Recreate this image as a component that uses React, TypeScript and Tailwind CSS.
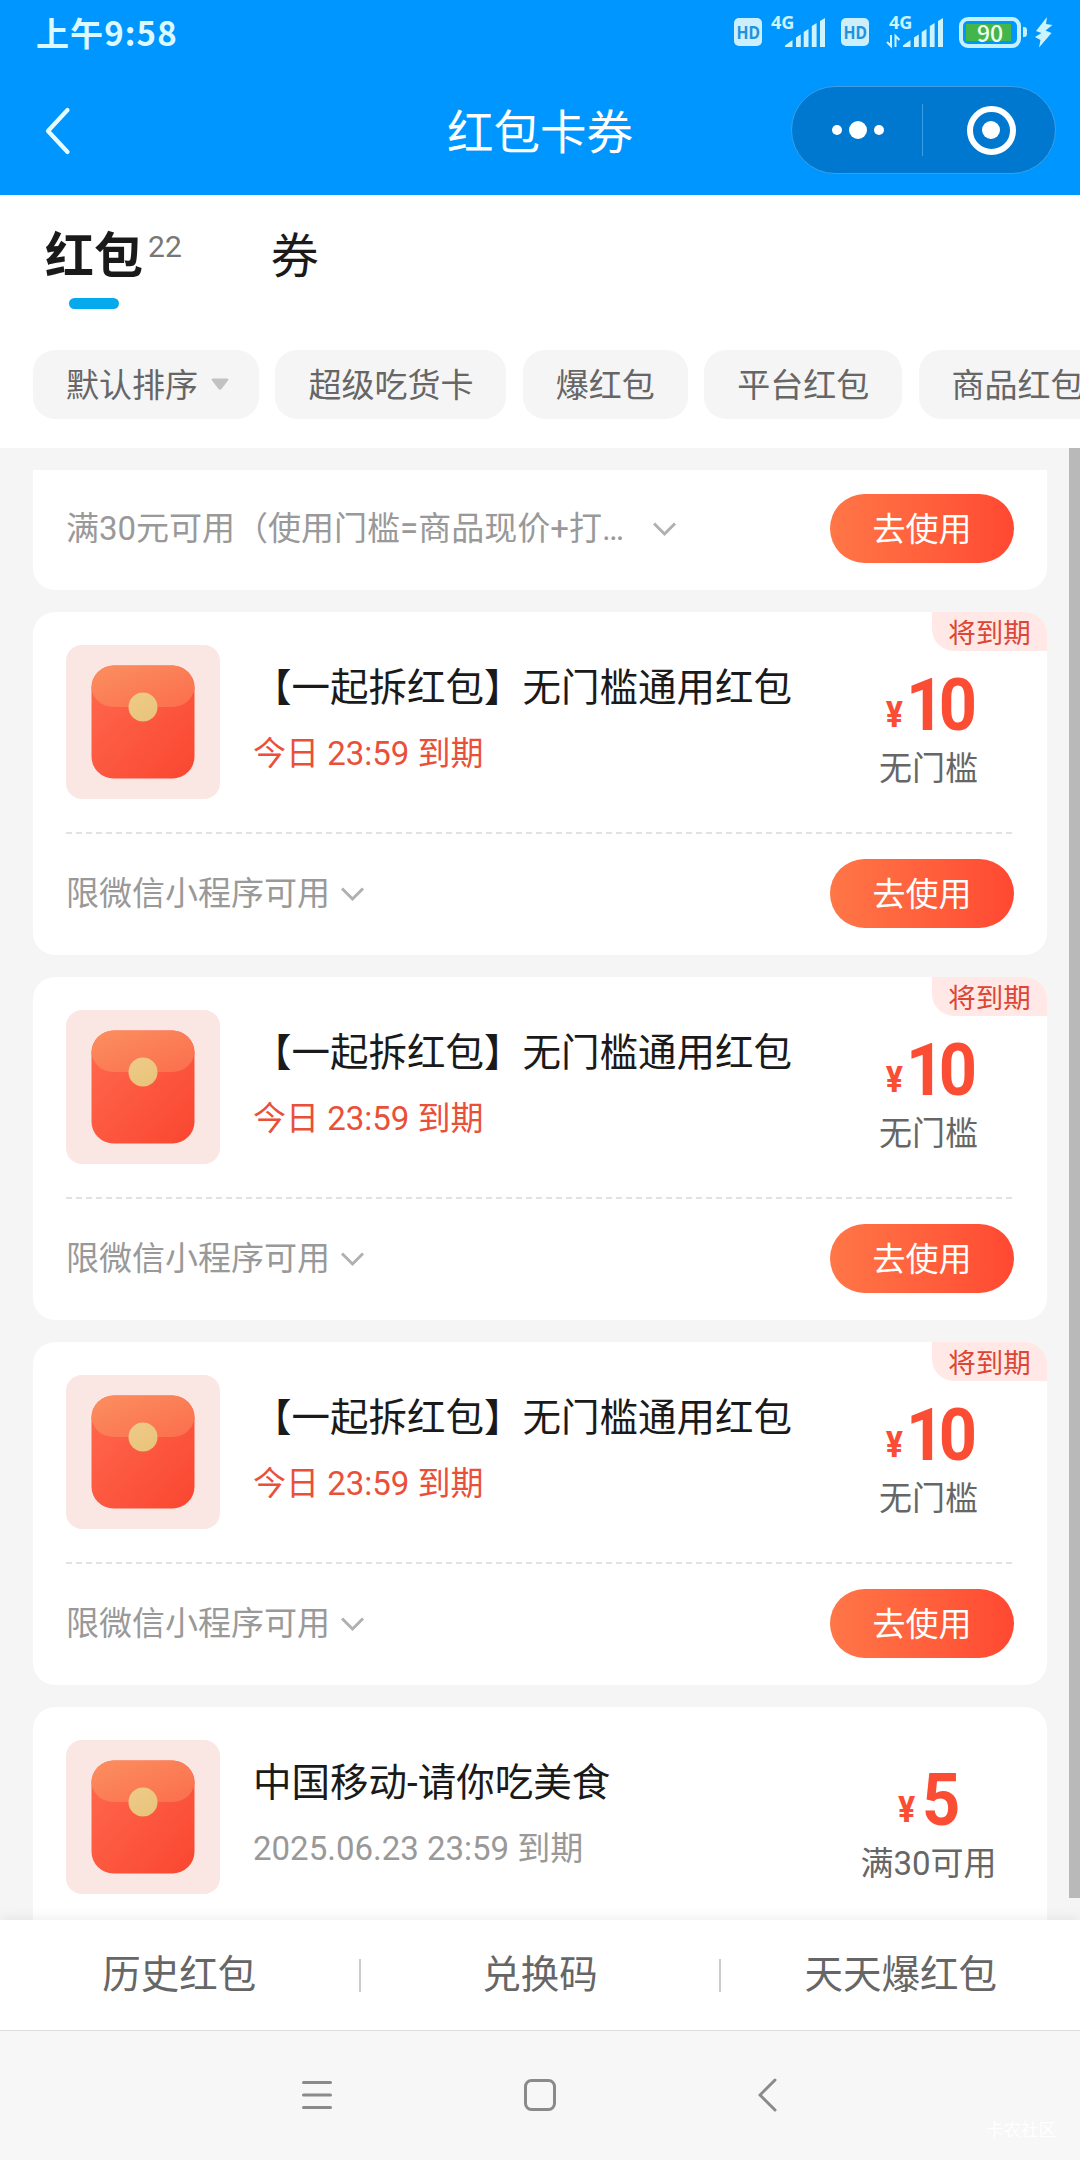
type Coupon = {
  title: string;
  expiry: string;
  amount: string;
  condition: string;
  note?: string;
  urgent: boolean;
};

const redPacket: Coupon = {
  title: '【一起拆红包】无门槛通用红包',
  expiry: '今日 23:59 到期',
  amount: '10',
  condition: '无门槛',
  note: '限微信小程序可用',
  urgent: true,
};

const coupons: Coupon[] = [
  redPacket,
  redPacket,
  redPacket,
  {
    title: '中国移动-请你吃美食',
    expiry: '2025.06.23 23:59 到期',
    amount: '5',
    condition: '满30可用',
    urgent: false,
  },
];

function HdIcon() {
  return (
    <svg width="28" height="28" viewBox="0 0 28 28">
      <rect width="28" height="28" rx="5" fill="#cdeffb" />
      <text x="2.500" y="21" fill="#1f93dd" fontFamily="Noto Sans" fontWeight="700" fontSize="18.500" textLength="23.500" lengthAdjust="spacingAndGlyphs">
        HD
      </text>
    </svg>
  );
}

function Signal({ data }: { data?: boolean }) {
  return (
    <svg className="overflow-visible" width="60" height="32" viewBox="0 0 60 32" fill="#cdf3fd">
      <text x="2" y="12.500" fontFamily="Noto Sans" fontWeight="700" fontSize="17" textLength="23.500" lengthAdjust="spacingAndGlyphs">
        4G
      </text>
      <path d="M16 31 V29.500 L23.500 24 V31Z M27 21.500 L31.800 18.500 V31 H27Z M34.700 16 L39.500 13 V31 H34.700Z M42.800 10 L47.600 7 V31 H42.800Z M51 5 L56 2 V31 H51Z" />
      {data && <path d="M4 19 V30 L0 26 M8.500 31 V20 L12.500 24" fill="none" stroke="#cdf3fd" strokeWidth="2" />}
    </svg>
  );
}

function StatusBar() {
  return (
    <div className="flex h-[66px] items-start pl-9 pr-[27px] text-[#dcf9ff]">
      <div className="mt-[11px] flex-1 font-['Noto_Sans_CJK_SC',sans-serif] text-[33px] font-bold leading-[42px] tracking-[1.1px]">
        上午9:58
      </div>
      <div className="mt-4 flex h-8 items-center">
        <HdIcon />
        <div className="ml-[7px] flex">
          <Signal />
        </div>
        <div className="ml-3 flex">
          <HdIcon />
        </div>
        <div className="ml-[18px] flex">
          <Signal data />
        </div>
        <div className="ml-3 flex h-[31px] w-[62px] items-center justify-center rounded-[9px] border-4 border-[#c4f1fb] p-[3px]">
          <div className="flex h-[17px] w-full items-center justify-center bg-linear-to-r from-[#43b649] from-[93%] to-transparent to-[93%] font-['Noto_Sans_CJK_SC',sans-serif] text-[23px] font-medium leading-none text-[#effff5]">
            90
          </div>
        </div>
        <div className="ml-[2px] h-[10px] w-1 rounded-r-[3px] bg-[#c4f1fb]" />
        <svg className="ml-[7px]" width="19" height="32" viewBox="0 0 19 32" fill="#cdf3fd">
          <path d="M13 1 L2 15 L7.500 17 L1 21 L6.500 24 L5 31.500 L17.500 17 L11.500 14.500 L18.500 9 L12 8Z" />
        </svg>
      </div>
    </div>
  );
}

function Header() {
  return (
    <header className="h-[195px] shrink-0 bg-[#0096ff]">
      <StatusBar />
      <div className="grid h-[129px] grid-cols-[1fr_auto_1fr] items-center">
        <svg className="ml-[42px]" width="30" height="50" viewBox="0 0 30 50" fill="none" stroke="#e6fbff" strokeWidth="4.200" strokeLinecap="round" strokeLinejoin="round">
          <path d="M25.500 4 L6 25 L25.500 46" />
        </svg>
        <h1 className="mb-1 font-['Noto_Sans_CJK_SC',sans-serif] text-[46.500px] leading-[60px] text-white">红包卡券</h1>
        <div className="mb-[2px] mr-6 flex h-[88px] w-[265px] items-center justify-self-end rounded-full border border-[#3a9fe6] bg-[#0078cf]">
          <div className="flex flex-1 items-center justify-center gap-[7px] pl-[2px] pt-px">
            <span className="h-[10px] w-[10px] rounded-full bg-white" />
            <span className="h-[18px] w-[18px] rounded-full bg-white" />
            <span className="h-[10px] w-[10px] rounded-full bg-white" />
          </div>
          <div className="h-[52px] w-px bg-[#3a9fe6]" />
          <div className="flex flex-1 items-center justify-center pl-[5px] pt-px">
            <div className="flex h-[49px] w-[49px] items-center justify-center rounded-full border-[6px] border-white">
              <span className="h-[18px] w-[18px] rounded-full bg-white" />
            </div>
          </div>
        </div>
      </div>
    </header>
  );
}

function Tabs() {
  return (
    <div className="flex h-[155px] items-start pl-[45px] pt-[27px] text-[#1a1a1a]">
      <div className="flex flex-col">
        <div className="flex h-[66px]">
          <span className="pt-[2px] text-[49px] font-bold leading-[66px]">红包</span>
          <span className="ml-[5px] mt-[3px] text-[30px] leading-[44px] text-[#777]">22</span>
        </div>
        <div className="ml-6 mt-[10px] h-[11px] w-[50px] rounded-full bg-[#06a9eb]" />
      </div>
      <span className="ml-[89px] pt-[2px] text-[48px] leading-[66px]">券</span>
    </div>
  );
}

function Filters() {
  const chips = ['超级吃货卡', '爆红包', '平台红包', '商品红包'];
  return (
    <div className="flex h-[98px] items-start gap-[16.400px] overflow-hidden pl-[33px] text-[33px] text-[#666]">
      <div className="flex h-[69px] w-[226px] shrink-0 items-center rounded-[22px] bg-[#f5f5f5] pl-[33px]">
        <span className="pt-[2px]">默认排序</span>
        <svg className="ml-[13px]" width="18" height="13" viewBox="0 0 18 13" fill="#c2c2c2">
          <path d="M2 0.500 H16 Q18 0.500 17 2.500 L10.500 11 Q9 12.500 7.500 11 L1 2.500 Q0 0.500 2 0.500Z" />
        </svg>
      </div>
      {chips.map((chip) => (
        <div key={chip} className="flex h-[69px] shrink-0 items-center rounded-[22px] bg-[#f5f5f5] px-[33px] pt-[2px]">
          {chip}
        </div>
      ))}
    </div>
  );
}

function Chevron() {
  return (
    <svg className="mt-[2px] shrink-0" width="24" height="15" viewBox="0 0 24 15" fill="none" stroke="#b0b0b0" strokeWidth="3">
      <path d="M1 1.500 L11.500 12 L22 1.500" />
    </svg>
  );
}

function UseButton() {
  return (
    <button className="ml-auto flex h-[69px] w-[184px] items-center justify-center rounded-full bg-linear-to-r from-[#ff7647] to-[#ff4832] pt-[3px] text-[33px] text-white">
      去使用
    </button>
  );
}

function Envelope() {
  return (
    <div className="flex h-[154px] w-[154px] shrink-0 items-center justify-center rounded-2xl bg-[#fae7e3]">
      <svg width="104" height="114" viewBox="0 0 104 114">
        <defs>
          <linearGradient id="body" x1="0" y1="0" x2="1" y2="1">
            <stop offset="0" stopColor="#ff6a50" />
            <stop offset="1" stopColor="#fa4630" />
          </linearGradient>
          <linearGradient id="flap" x1="0" y1="0" x2="1" y2="1">
            <stop offset="0" stopColor="#fb8f60" />
            <stop offset="1" stopColor="#fb6e4c" />
          </linearGradient>
          <linearGradient id="seal" x1="0" y1="0" x2="0.500" y2="1">
            <stop offset="0" stopColor="#efcb88" />
            <stop offset="1" stopColor="#e8c47c" />
          </linearGradient>
        </defs>
        <rect x="0.500" y="0.500" width="103" height="113" rx="22" fill="url(#body)" />
        <path d="M0.500 22.500 A22 22 0 0 1 22.500 0.500 H81.500 A22 22 0 0 1 103.500 22.500 V24 C101 35 93 42 80 42 H24 C11 42 3 35 0.500 24Z" fill="url(#flap)" />
        <circle cx="52" cy="42" r="14.500" fill="url(#seal)" />
      </svg>
    </div>
  );
}

function Amount({ value }: { value: string }) {
  const spacing = value.length === 1 ? 'ml-[6px] mr-[2px]' : 'ml-[3px] mr-[-6px]';
  return (
    <div className="flex h-[74px] items-baseline font-['Roboto'] text-[#fb4c34]">
      <span className="-translate-y-[3px] text-[37.500px] font-semibold leading-[74px] [font-stretch:75%]">¥</span>
      <span className={spacing}>
        <span className="inline-block origin-left scale-x-[0.92] text-[72.500px] font-bold leading-[74px] tracking-[-6px]">
          {value}
        </span>
      </span>
    </div>
  );
}

function CouponCard({ coupon }: { coupon: Coupon }) {
  return (
    <article className="relative h-[343px] shrink-0 rounded-[22px] bg-white px-[33px] pt-[33px]">
      {coupon.urgent && (
        <div className="absolute right-0 top-0 flex h-[39px] w-[115px] items-center justify-center rounded-bl-[22px] rounded-tr-[22px] bg-[#ffe8e5] pt-[5px] text-[27.500px] leading-8 text-[#dc4735]">
          将到期
        </div>
      )}
      <div className="flex h-[154px]">
        <Envelope />
        <div className="ml-[33px] flex-1 whitespace-nowrap pt-[18px]">
          <h2 className="text-[38.500px] leading-[50px] text-[#1a1a1a]">{coupon.title}</h2>
          <p className={coupon.urgent ? 'mt-[19px] text-[33px] leading-[44px] text-[#ea5039]' : 'mt-[19px] text-[33px] leading-[44px] text-[#999]'}>
            {coupon.expiry}
          </p>
        </div>
        <div className="flex w-[171px] flex-col items-center pt-6">
          <Amount value={coupon.amount} />
          <div className="mt-1 text-[33px] leading-[44px] text-[#666]">{coupon.condition}</div>
        </div>
      </div>
      {coupon.note && (
        <>
          <div className="mt-[33px] h-[2px] bg-[repeating-linear-gradient(90deg,#e2e2e2_0_6px,transparent_6px_10px)]" />
          <div className="mt-[25px] flex h-[69px] items-center gap-[11px] text-[33px] text-[#999]">
            <span className="pt-px">{coupon.note}</span>
            <Chevron />
            <UseButton />
          </div>
        </>
      )}
    </article>
  );
}

function CouponList() {
  return (
    <main className="relative min-h-0 flex-1 overflow-hidden bg-[#f5f5f5] px-[33px] pt-[22px]">
      <div className="flex flex-col gap-[22px]">
        <article className="h-[120px] shrink-0 rounded-b-[22px] bg-white px-[33px] pt-6">
          <div className="flex h-[69px] items-center text-[33px] text-[#999]">
            <span className="w-[576px] truncate pt-px">满30元可用（使用门槛=商品现价+打包费）</span>
            <span className="ml-[11px]">
              <Chevron />
            </span>
            <UseButton />
          </div>
        </article>
        {coupons.map((coupon, index) => (
          <CouponCard key={index} coupon={coupon} />
        ))}
      </div>
      <div className="absolute right-0 top-0 h-[1450px] w-[11px] bg-[#b9b9b9]" />
    </main>
  );
}

function BottomActions() {
  return (
    <div className="relative grid h-[110px] shrink-0 grid-cols-[1fr_2px_1fr_2px_1fr] items-center bg-white text-center text-[38.500px] text-[#666] shadow-[0_-2px_12px_rgba(0,0,0,0.07)]">
      <span>历史红包</span>
      <span className="h-[33px] bg-[#ccc]" />
      <span>兑换码</span>
      <span className="h-[33px] bg-[#ccc]" />
      <span>天天爆红包</span>
    </div>
  );
}

function SystemNav() {
  return (
    <nav className="relative flex h-[130px] shrink-0 items-center justify-center border-t border-[#dcdcdc] bg-[#f7f7f7] pb-[2px] pr-[2px]">
      <svg className="mr-[190px]" width="32" height="34" viewBox="0 0 32 34" fill="none" stroke="#8a8a8a" strokeWidth="3" strokeLinecap="round">
        <path d="M2.500 4.500 H29.500 M2.500 17 H29.500 M2.500 29.500 H29.500" />
      </svg>
      <svg width="34" height="34" viewBox="0 0 34 34" fill="none" stroke="#8a8a8a" strokeWidth="3">
        <rect x="2.500" y="2.500" width="29" height="29" rx="6" />
      </svg>
      <svg className="ml-[201px]" width="20" height="36" viewBox="0 0 20 36" fill="none" stroke="#8a8a8a" strokeWidth="3" strokeLinecap="round">
        <path d="M17 3 L2 18 L17 33" />
      </svg>
      <span className="absolute bottom-[18px] right-6 text-[17.500px] leading-6 text-white">卡农社区</span>
    </nav>
  );
}

export default function App() {
  return (
    <div className="flex h-[2160px] w-[1080px] flex-col overflow-hidden bg-white font-['Roboto','Noto_Sans_CJK_SC',sans-serif]">
      <Header />
      <Tabs />
      <Filters />
      <CouponList />
      <BottomActions />
      <SystemNav />
    </div>
  );
}
